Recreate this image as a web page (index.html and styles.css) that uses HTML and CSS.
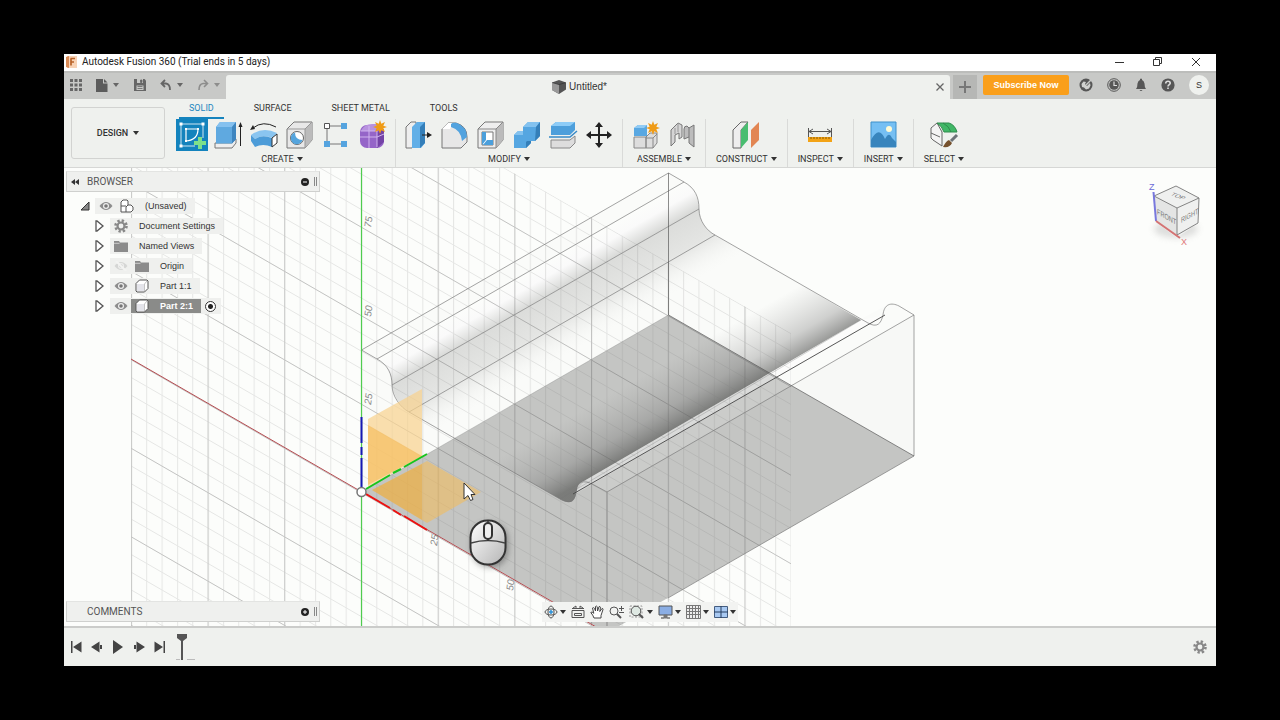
FILE: index.html
```html
<!DOCTYPE html>
<html lang="en">
<head>
<meta charset="utf-8">
<meta name="viewport" content="width=device-width, initial-scale=1">
<title>Autodesk Fusion 360</title>
<link rel="stylesheet" href="styles.css">
</head>
<body>
<svg class="defs" aria-hidden="true">
  <symbol id="eye" viewBox="0 0 14 10"><path d="M0.5 5Q7-3 13.5 5Q7 13 .5 5Z" fill="#8c8c8c"/><circle cx="7" cy="5" r="3" fill="#eee"/><circle cx="7" cy="5" r="1.8" fill="#777"/></symbol>
  <symbol id="folder" viewBox="0 0 14 12"><path d="M0 1h5l1 1.5h8V12H0Z" fill="#8b8b8b"/><path d="M0 3.3h5.5" stroke="#ddd" stroke-width=".8"/></symbol>
  <symbol id="part" viewBox="0 0 14 14"><path d="M1 4.5 4.5 1H12l1 1v7.500L9.500 13H2l-1-1Z" fill="#fff" stroke="#555"/><path d="M2 5h7v7H2Z" fill="#e4e4ea"/><path d="M9.500 12V5L12 2" fill="none" stroke="#aaa" stroke-width=".7"/></symbol>
  <symbol id="closed" viewBox="0 0 9 12"><path d="M1 1h1l6 5-6 5H1Z" fill="#fff" stroke="#555" stroke-width="1.300"/></symbol>
</svg>
<main class="app">
  <header class="titlebar">
    <svg class="logo" width="11" height="12" viewBox="0 0 11 12"><path d="M1 0h10v12H1Z" fill="#f8d3b6"/><path d="M0 1l3-1v12l-3-1Z" fill="#d98a55"/><path d="M4.500 2.500H9M5 2.500v7M5 6h3" stroke="#b9632a" stroke-width="1.700"/></svg>
    <h1 class="title">Autodesk Fusion 360 (Trial ends in 5 days)</h1>
    <div class="window-buttons">
      <button aria-label="Minimize"><svg width="10" height="10"><path d="M0 5.500h9" stroke="#333"/></svg></button>
      <button aria-label="Restore"><svg width="10" height="10" fill="none" stroke="#333"><path d="M.5 2.500h6v6h-6ZM2.500 2V.5h6v6H7"/></svg></button>
      <button aria-label="Close"><svg width="10" height="10"><path d="M1 1l8 8M9 1l-8 8" stroke="#333"/></svg></button>
    </div>
  </header>

  <div class="tabbar">
    <div class="quick">
      <button class="q-grid" aria-label="Data panel"><svg width="12" height="12" fill="#666"><path d="M0 0h3v3H0ZM4.500 0h3v3h-3ZM9 0h3v3H9ZM0 4.500h3v3H0ZM4.500 4.500h3v3h-3ZM9 4.500h3v3H9ZM0 9h3v3H0ZM4.500 9h3v3h-3ZM9 9h3v3H9Z"/></svg></button>
      <button class="q-drop" aria-label="File"><svg width="12" height="13"><path d="M0 0h7v4.500h4.500V13H0Z" fill="#5c5c5c"/><path d="M8 0l3.500 3.500H8Z" fill="#5c5c5c"/></svg><i class="caret"></i></button>
      <button class="q-save" aria-label="Save"><svg width="12" height="12"><path d="M0 0h10.500L12 1.500V12H0Z" fill="#666"/><path d="M3 0h6v4H3ZM2.500 6.500h7V11h-7Z" fill="#c8c9c7"/><path d="M6.500 1h1.500v2.500H6.500ZM3.500 7.500h5M3.500 9.500h5" fill="#666" stroke="#666" stroke-width=".8"/></svg></button>
      <button class="q-drop" aria-label="Undo"><svg width="12" height="12" fill="none" stroke="#666" stroke-width="1.800"><path d="M5 1 1.500 4.500 5 8M2 4.500h4Q10 5 10 11"/></svg><i class="caret"></i></button>
      <button class="q-drop faded" aria-label="Redo"><svg width="12" height="12" fill="none" stroke="#666" stroke-width="1.600"><path d="M7 1l3.500 3.500L7 8M10 4.500H6Q2 5 2 11"/></svg><i class="caret"></i></button>
    </div>
    <div class="doc-tab">
      <svg width="14" height="14" viewBox="0 0 14 14"><path d="M0 2.500 7 0l7 2.500v7L7 14 0 10Z" fill="#555"/><path d="M0 2.500 7 4.500V14L0 10Z" fill="#999"/><path d="M.5 2.600 7 4.600l6.500-2" fill="none" stroke="#333" stroke-width=".7"/></svg>
      <span>Untitled*</span>
      <button class="tab-close" aria-label="Close tab"><svg width="8" height="8"><path d="M.5.5l7 7M7.500.5l-7 7" stroke="#666" stroke-width="1.300"/></svg></button>
    </div>
    <button class="tab-new" aria-label="New tab"><svg width="12" height="12"><path d="M6 0v12M0 6h12" stroke="#777" stroke-width="2"/></svg></button>
    <button class="subscribe">Subscribe Now</button>
    <div class="account">
      <button aria-label="Extensions"><svg width="14" height="14"><circle cx="7" cy="7" r="6.500" fill="#565656"/><path d="M3 9 2.500 6l2-2.500 2.500.5-1 2 2 2 3-3 .5 2.500-1.500 3-3 1-2-2Z" fill="#d0d1cf"/><path d="M12 2 7 7" stroke="#c8c9c7" stroke-width="1.500"/></svg></button>
      <button aria-label="Job status"><svg width="14" height="14"><circle cx="7" cy="7" r="6.300" fill="#c8c9c7" stroke="#565656"/><circle cx="7" cy="7" r="4.800" fill="#565656"/><path d="M7 3.500V7.500h3" fill="none" stroke="#ddd" stroke-width="1.200"/></svg></button>
      <button aria-label="Notifications"><svg width="12" height="14" fill="#565656"><path d="M1 11Q2.500 9.500 2.500 5.500 3 2.500 5 2V.8h2V2q2 .5 2.500 3.500 0 4 1.500 5.500ZM4.500 12h3q-1.500 2-3 0Z"/></svg></button>
      <button aria-label="Help"><svg width="14" height="14"><circle cx="7" cy="7" r="6.600" fill="#565656"/><path d="M4.700 5.500Q4.800 3.300 7 3.300T9.200 5.300C9.200 6.700 7 6.700 7 8.600M7 9.500v1.600" fill="none" stroke="#ddd" stroke-width="1.600"/></svg></button>
      <button class="avatar" aria-label="Profile">S</button>
    </div>
  </div>

  <div class="ribbon">
    <button class="workspace">DESIGN <i class="caret"></i></button>
    <div class="ribbon-main">
      <nav class="ribbon-tabs">
        <button class="active">SOLID</button><button>SURFACE</button><button>SHEET METAL</button><button>TOOLS</button>
      </nav>
      <div class="groups">
        <section class="group">
          <div class="tools">
            <button class="on" aria-label="Create sketch"><svg width="32" height="32"><path d="M5 5h22M5 5v22M27 5v14M5 27h14" stroke="#fff" stroke-opacity=".8"/><path d="M10 10h12Q22 21 10 22Z" fill="none" stroke="#fff" stroke-width="1.200"/><g fill="#fff"><path d="M3.500 3.500h3v3h-3ZM25.500 3.500h3v3h-3ZM3.500 25.500h3v3h-3ZM9 9h2v2H9ZM21 9h2v2h-2ZM9 21h2v2H9Z"/></g><path d="M24 18v12M18 24h12" stroke="#7de08a" stroke-width="4"/></svg></button>
            <button aria-label="Extrude"><svg width="32" height="32"><path d="M3 24h17l4-4v4l-4 5H3Z" fill="#eee" stroke="#777"/><path d="M4 8l4-5h16v17l-4 4.500H4Z" fill="#5fa9e0"/><path d="M4 8l4-5h16l-4 5Z" fill="#85c1ef"/><path d="M20 8l4-5v17l-4 4.500Z" fill="#3e86c0"/><path d="M28.500 27V5" stroke="#222"/><path d="M26.500 8l2-5 2 5Z" fill="#222"/></svg></button>
            <button aria-label="Revolve"><svg width="32" height="32"><path d="M3 16Q15 7 29 14l-4 5Q14 15 7 20Z" fill="#8ac5f0"/><path d="M3 16l4 4v8l-4-6ZM7 20q7-5 17-1v9q-9-4-17 0Z" fill="#4c9cd8"/><path d="M24 19l5-4v9l-5 4Z" fill="#fff" stroke="#333"/><path d="M5 9Q15 1 28 8" fill="none" stroke="#222"/><path d="M2 11l3-5 2 4Z" fill="#222"/></svg></button>
            <button aria-label="Hole"><svg width="32" height="32"><path d="M3 10l7-7h18v18l-7 8H3Z" fill="#e8e8e8" stroke="#777"/><path d="M21 10l7-7v18l-7 8Z" fill="#bbb"/><path d="M3 10h18v19M21 10l7-7" fill="none" stroke="#999"/><circle cx="13" cy="19" r="6.500" fill="#fff" stroke="#666"/><path d="M11 13.500a6 6 0 1 0 7.500 7.500Q11 21 11 13.500Z" fill="#54a4dd"/></svg></button>
            <button aria-label="Pattern"><svg width="32" height="32"><path d="M8 7h14M7 9v14M9 25h13" stroke="#777"/><path d="M4.500 4.500h5v5h-5Z" fill="#fff" stroke="#555"/><path d="M21 4h6v6h-6ZM4 22h6v6H4ZM21 22h6v6h-6Z" fill="#55a4df"/></svg></button>
            <button aria-label="Form"><svg width="32" height="32"><rect x="4" y="6" width="24" height="23" rx="7" fill="#9565c8"/><path d="M5 12Q8 5 16 5h8l-5 7Z" fill="#b892df"/><path d="M21 13l7-3v13l-7 6Z" fill="#7443a6"/><path d="M4 18h17l7-3M13 7v22M5 12h16v16" stroke="#d0b4ee" fill="none"/><path d="M24 1l1.300 3.700L29 3l-1.700 3.700L31 8l-3.700 1.300L29 13l-3.700-1.700L24 15l-1.300-3.700L19 13l1.700-3.700L17 8l3.700-1.300L19 3l3.700 1.700Z" fill="#ef9b16"/></svg></button>
          </div>
          <button class="group-label">CREATE <i class="caret"></i></button>
        </section>
        <section class="group">
          <div class="tools">
            <button aria-label="Press pull"><svg width="32" height="32"><path d="M3 8l5-5h5v20l-4 6H3Z" fill="#eee" stroke="#777"/><path d="M9 8l5-5h8v21l-4 5H9Z" fill="#62afe7"/><path d="M17 8l5-5v21l-5 5Z" fill="#347fb9"/><path d="M19 16h7" stroke="#222"/><path d="M24 13l5 3-5 3Z" fill="#222"/></svg></button>
            <button aria-label="Fillet"><svg width="32" height="32"><path d="M3 10l6-6h8q11 3 11 14v5l-6 6H3Z" fill="#e7e7e7" stroke="#777"/><path d="M3 10l6-6h5l-3 6Z" fill="#fff"/><path d="M12 5q2-2 6-1 10 4 10 14l-5 4Q22 11 12 8Z" fill="#52a3df"/></svg></button>
            <button aria-label="Shell"><svg width="32" height="32"><path d="M3 10l7-7h18v18l-7 8H3Z" fill="#eee" stroke="#777"/><path d="M21 10l7-7v18l-7 8Z" fill="#bbb"/><path d="M3 10h18v19M21 10l7-7" fill="none" stroke="#888"/><path d="M7 13h11v13H7Z" fill="#fff" stroke="#777"/><path d="M7 13h4v8l-4 5ZM8 26l4-5h6v5Z" fill="#4b9fdb"/></svg></button>
            <button aria-label="Combine"><svg width="32" height="32"><path d="M3 16l4-4h5V8l5-5h12v14l-5 5h-4v2l-5 5H3Z" fill="#55a6e1"/><path d="M12 8l5-5h12l-4 5ZM3 16l4-4h5v4Z" fill="#83c2ef"/><path d="M25 8l4-5v14l-5 5ZM16 22h4v2l-5 5v-6Z" fill="#347fb9"/></svg></button>
            <button aria-label="Split body"><svg width="32" height="32"><path d="M4 7l5-4h19v8l-5 5H4Z" fill="#4d9fdb"/><path d="M4 7l5-4h19l-5 4Z" fill="#8dccf7"/><path d="M2 18h21l7-6" fill="none" stroke="#388ac7" stroke-width="1.500"/><path d="M4 21h19l5-4v7l-5 5H4Z" fill="#ddd" stroke="#888"/></svg></button>
            <button aria-label="Move"><svg width="32" height="32"><path d="M16 6v20M6 16h20" stroke="#222" stroke-width="2"/><path d="M16 3l4 5h-8ZM16 29l4-5h-8ZM3 16l5-4v8ZM29 16l-5-4v8Z" fill="#222"/></svg></button>
          </div>
          <button class="group-label">MODIFY <i class="caret"></i></button>
        </section>
        <section class="group">
          <div class="tools">
            <button aria-label="New component"><svg width="32" height="32"><path d="M4 9l4-3h9v11H4Z" fill="#59a8e2"/><path d="M4 9l4-3h9l-3 3Z" fill="#91cbf4"/><path d="M4 18h12v11H4ZM16 18l4-4h7v10l-4 5h-7Z" fill="#ddd" stroke="#888"/><path d="M16 19h7v10M23 19l4-4" fill="none" stroke="#888"/><path d="M23 2l1.300 3.700L28 4l-1.700 3.700L30 9l-3.700 1.300L28 14l-3.700-1.700L23 16l-1.300-3.700L18 14l1.700-3.700L16 9l3.700-1.300L18 4l3.700 1.700Z" fill="#ef9b16"/></svg></button>
            <button aria-label="Joint"><svg width="32" height="32" stroke="#777"><path d="M5 11l7-7 4 2v12l-3 2v-6l-4 2v7l-4 4Z" fill="#d5d5d5"/><path d="M12 4v9M9 15V9" fill="none" stroke="#999"/><path d="M18 10q0-3 3-3l2 2 5-3v22l-5-4v-6l-5 2Z" fill="#bcbcbc"/><path d="M23 9v9" fill="none"/></svg></button>
          </div>
          <button class="group-label">ASSEMBLE <i class="caret"></i></button>
        </section>
        <section class="group single">
          <div class="tools"><button aria-label="Offset plane"><svg width="32" height="32"><path d="M3 11l8-8h7l-7 8v18H3Z" fill="#eee" stroke="#666"/><path d="M11 11l7-8v18l-7 8Z" fill="#49bd70"/><path d="M21 11l8-8v18l-8 8Z" fill="#e28653"/></svg></button></div>
          <button class="group-label">CONSTRUCT <i class="caret"></i></button>
        </section>
        <section class="group single">
          <div class="tools"><button aria-label="Measure"><svg width="32" height="32"><path d="M4.500 9v10M27.500 9v10M5 12.500h22M9 10l-4 2.500L9 15M23 10l4 2.500-4 2.500" fill="none" stroke="#555"/><path d="M4 18h24v5H4Z" fill="#f3a316"/><path d="M7 18v2M10 18v2M13 18v2M16 18v2M19 18v2M22 18v2M25 18v2" stroke="#8a5b00"/></svg></button></div>
          <button class="group-label">INSPECT <i class="caret"></i></button>
        </section>
        <section class="group single">
          <div class="tools"><button aria-label="Insert image"><svg width="32" height="32"><path d="M4 3h25v25H4Z" fill="#75bff3" stroke="#3e91cb"/><path d="M4 21Q12 6 18 20q4-8 7-1l4 4v5H4Z" fill="#3885bd"/><circle cx="22" cy="10" r="3" fill="#fffbd5"/></svg></button></div>
          <button class="group-label">INSERT <i class="caret"></i></button>
        </section>
        <section class="group single last">
          <div class="tools"><button aria-label="Select"><svg width="32" height="32"><path d="M3 9 9 4l5 9v14L5 21 3 19ZM3 14l9 4" fill="#f4f4f4" stroke="#666"/><path d="M9 4h12q6 2 8 9H16Q14 7 9 4Z" fill="#40b766" stroke="#2f8b4c"/><path d="M15 4q6 3 8 9" fill="none" stroke="#2f8b4c"/><path d="M29 16l-6 6" stroke="#6d7378" stroke-width="3"/><path d="M21 21l3 3q-2 5-9 4 3-6 6-7Z" fill="#76512d"/></svg></button></div>
          <button class="group-label">SELECT <i class="caret"></i></button>
        </section>
      </div>
    </div>
  </div>

  <div class="viewport">
    <svg class="scene" viewBox="64 168 1152 458" preserveAspectRatio="xMidYMid slice" role="img" aria-label="Model view">
      <defs>
        <pattern id="minor" width="15.340" height="17.700" patternUnits="userSpaceOnUse" patternTransform="translate(361 492) skewY(30)"><path d="M0 .5H15.340M.5 0V17.700" stroke="#777" stroke-opacity=".17" fill="none"/></pattern>
        <pattern id="major" width="76.700" height="88.500" patternUnits="userSpaceOnUse" patternTransform="translate(361 492) skewY(30)"><path d="M0 .5H76.700M.5 0V88.500" stroke="#555" stroke-opacity=".24" fill="none"/></pattern>
        <linearGradient id="crest" gradientUnits="userSpaceOnUse" x1="377" y1="359" x2="392" y2="385"><stop offset="0" stop-color="#fcfdfb"/><stop offset=".45" stop-color="#fafafa"/><stop offset="1" stop-color="#d9dad8"/></linearGradient>
        <linearGradient id="valley" gradientUnits="userSpaceOnUse" x1="392" y1="385" x2="425" y2="442"><stop offset="0" stop-color="#dbdcda"/><stop offset=".45" stop-color="#e4e5e3"/><stop offset="1" stop-color="#fcfdfb" stop-opacity="0"/></linearGradient>
        <linearGradient id="groove" gradientUnits="userSpaceOnUse" x1="584" y1="481" x2="553" y2="427"><stop offset="0" stop-color="#3c3d3b" stop-opacity=".54"/><stop offset=".35" stop-color="#555" stop-opacity=".26"/><stop offset="1" stop-color="#777" stop-opacity="0"/></linearGradient>
        <linearGradient id="mouse" x2="1" y2="1"><stop stop-color="#fff"/><stop offset="1" stop-color="#b5b5b5"/></linearGradient>
        <filter id="soft" x="-50%" y="-50%" width="200%" height="200%"><feGaussianBlur stdDeviation="3"/></filter>
      </defs>
      <path d="M361.500 350 668.500 173 684 182C695 188 699 197 699 209S707 231 715 235L861 319 891 303 914 315V456L607 633 361.500 492Z" fill="#fafbf9"/>
      <path d="M607 492 914 315V456L607 633Z" fill="#f7f8f6"/>
      <path d="M377 359 684 182Q698 190 699 209L392 385Q392 368 377 359Z" fill="url(#crest)"/>
      <path d="M392 385 699 209Q700 227 715 235L744 252 437 429 409 412Q394 401 392 385Z" fill="url(#valley)"/>
      <path d="M361.500 492 668.500 315 914 456 607 633Z" fill="#c4c5c3"/>
      <path d="M409 412 560 499C572 506 575 501 577 490 577 485 580 482 584 481L861 320 715 235Z" fill="url(#groove)"/>
      <path d="M577 490 584 481 861 320 885 315 575 494Z" fill="#fff" opacity=".38"/>
      <path d="M575 494 885 315 891 303 914 315 607 492 594 484Z" fill="#fff" opacity=".13"/>
      <path d="M131 168H505L791 333V626H131Z" fill="url(#minor)"/>
      <path d="M131 168H505L791 333V626H131Z" fill="url(#major)"/>
      <g fill="none" stroke="#777" stroke-opacity=".75" stroke-width=".9">
        <path d="M361.500 350 668.500 173 684 182C695 188 699 197 699 209S707 231 715 235L868 323C877 328 881 324 883 315 884 304 891 302 899 306L914 315V456L668 598"/>
        <path d="M361.500 350 377 359C388 365 392 374 392 385S400 407 409 412L560 499C569 504 575 502 576 491 577 481 584 480 592 484L607 492V626"/>
        <path d="M377 359 684 182M392 385 699 209M409 412 715 235M607 492 914 315"/>
        <path d="M668.500 173V315L914 456" stroke="#555"/>
        <path d="M361.500 492 668.500 315M560 499 861 320" stroke-opacity=".35"/>
        <path d="M573 494 885 315" stroke="#444" stroke-opacity="1"/>
      </g>
      <path d="M131 359 610 635" stroke="#b54b50" fill="none"/>
      <path d="M361.500 168V626" stroke="#4fcc4f" stroke-width="1.200"/>
      <path d="M368 419 422 389V456L368 488Z" fill="#f8d28d" opacity=".7"/>
      <path d="M368 425 422 456 368 485Z" fill="#f6b64b" opacity=".55"/>
      <path d="M372 490 427 461 481 492 427 523Z" fill="#f5bc55" opacity=".55"/>
      <path d="M372 490 422 464V520Z" fill="#e6a83c" opacity=".45"/>
      <g fill="none" stroke-width="2">
        <path d="M361.500 417V443M361.500 447V455M361.500 458V488" stroke="#1717b5"/>
        <path d="M366 489 390 475M393 473 401 469M404 467 427 454" stroke="#16c51b"/>
        <path d="M366 494 390 508M393 510 401 515M404 516 427 530" stroke="#ed1111"/>
      </g>
      <circle cx="361.500" cy="492" r="4.500" fill="#fff" stroke="#777" stroke-width="1.500"/>
      <g class="axis-label">
        <text transform="translate(371 228) rotate(-82)">75</text><text transform="translate(371 317) rotate(-82)">50</text><text transform="translate(371 405) rotate(-82)">25</text><text transform="translate(437 546) rotate(-82)">25</text><text transform="translate(513 591) rotate(-82)">50</text>
      </g>
      <path d="M464 483V499L468 495.500 470.500 500.500 473 499.500 471 494.500H475Z" fill="#fff" stroke="#333"/>
      <rect x="472" y="523" width="36" height="44" rx="17" fill="#444" opacity=".5" filter="url(#soft)"/>
      <rect x="470.500" y="520.500" width="35" height="44" rx="17" fill="url(#mouse)" stroke="#333" stroke-width="2"/>
      <path d="M471 543Q488 538 505 543" fill="none" stroke="#444" stroke-width="1.500"/>
      <path d="M488 520V523M488 539V541" stroke="#333" stroke-width="1.500"/><rect x="484" y="523" width="8" height="16" rx="4" fill="#eee" stroke="#333" stroke-width="2"/>
      <ellipse cx="1176" cy="229" rx="22" ry="9" fill="#999" opacity=".3" filter="url(#soft)"/>
      <path d="M1154 196 1176 186 1199 198 1198 223 1177 238 1157 223Z" fill="#eff0ef"/>
      <path d="M1154 196 1177 208 1177 235 1157 223Z" fill="#e4e5e4"/>
      <path d="M1154 196 1176 186 1199 198 1177 208ZM1177 208V235L1198 223 1199 198" fill="none" stroke="#777" stroke-width=".9"/>
      <path d="M1153.500 192 1156 221" stroke="#7878dd" stroke-width="2"/><path d="M1156 221 1180 238" stroke="#d47373" stroke-width="2"/>
      <g class="cube-label"><text transform="matrix(.9 .35 -.7 .55 1170 195)">TOP</text><text transform="matrix(.8 .45 0 1.1 1157 214)">FRONT</text><text transform="matrix(.8 -.45 0 1.1 1181 223)">RIGHT</text></g>
      <text class="axis-z" x="1149" y="190">Z</text><text class="axis-x" x="1181" y="245">X</text>
    </svg>

    <aside class="browser">
      <header class="panel"><svg width="8" height="6"><path d="M4 0v6L0 3ZM8 0v6L4 3Z" fill="#333"/></svg><h2>BROWSER</h2><button aria-label="Collapse browser"><svg width="8" height="8"><circle cx="4" cy="4" r="4" fill="#222"/><path d="M2 4h4" stroke="#fff"/></svg></button><i class="grip"></i></header>
      <ul class="tree">
        <li class="root"><span class="slot"><svg width="10" height="10"><path d="M9 1v8H1Z" fill="#888" stroke="#333"/></svg></span><div class="item"><span class="slot"><svg width="14" height="10"><use href="#eye"/></svg></span><span class="slot"><svg width="14" height="14" fill="#fff" stroke="#555"><path d="M1 3l2-2h4l1 1v4h3l2 2v3l-2 2H1Z"/><path d="M6 13V8l2-2M1 7h5" fill="none"/></svg></span><span class="name">(Unsaved)</span></div></li>
        <li><span class="slot"><svg width="9" height="12"><use href="#closed"/></svg></span><div class="item"><span class="slot"><svg width="14" height="14"><circle cx="7" cy="7" r="5.500" fill="none" stroke="#888" stroke-width="2.600" stroke-dasharray="2.300 2.020"/><circle cx="7" cy="7" r="3.500" fill="none" stroke="#888" stroke-width="2.200"/></svg></span><span class="name">Document Settings</span></div></li>
        <li><span class="slot"><svg width="9" height="12"><use href="#closed"/></svg></span><div class="item"><span class="slot"><svg width="14" height="12"><use href="#folder"/></svg></span><span class="name">Named Views</span></div></li>
        <li><span class="slot"><svg width="9" height="12"><use href="#closed"/></svg></span><div class="item"><span class="slot hidden-eye"><svg width="14" height="10"><use href="#eye"/><path d="M2 0l10 10" stroke="#fff" stroke-width="2"/></svg></span><span class="slot"><svg width="14" height="12"><use href="#folder"/></svg></span><span class="name">Origin</span></div></li>
        <li><span class="slot"><svg width="9" height="12"><use href="#closed"/></svg></span><div class="item"><span class="slot"><svg width="14" height="10"><use href="#eye"/></svg></span><span class="slot"><svg width="14" height="14"><use href="#part"/></svg></span><span class="name">Part 1:1</span></div></li>
        <li><span class="slot"><svg width="9" height="12"><use href="#closed"/></svg></span><div class="item"><span class="slot"><svg width="14" height="10"><use href="#eye"/></svg></span><label class="selected" for="active-part"><span class="slot"><svg width="14" height="14"><use href="#part"/></svg></span><span class="name">Part 2:1</span></label><input id="active-part" type="radio" name="active" checked></div></li>
      </ul>
    </aside>

    <div class="bottom">
      <section class="panel comments"><h2>COMMENTS</h2><button aria-label="Expand comments"><svg width="8" height="8"><circle cx="4" cy="4" r="4" fill="#222"/><path d="M2 4h4M4 2v4" stroke="#fff"/></svg></button><i class="grip"></i></section>
      <nav class="navbar">
        <button aria-label="Orbit"><svg width="14" height="14" fill="none" stroke="#555"><ellipse cx="7" cy="7" rx="6" ry="3"/><ellipse cx="7" cy="7" rx="3" ry="6"/><path d="M5 7h4M7 5v4" stroke="#2b91d8" stroke-width="1.500"/></svg><i class="caret"></i></button>
        <button aria-label="Look at"><svg width="14" height="14" fill="none" stroke="#555"><path d="M1 5.500h12v7H1ZM3.500 8.500h7v2h-7ZM1 3.500h12M2 3l3-2v2M9 3V1l3 2"/></svg></button>
        <button aria-label="Pan"><svg width="14" height="14"><path d="M4 13Q3 10 .8 7.500q1-1.500 3 .8L2.500 3q1-1 2 .4L5.500 6 5.500 1.500q1-1 1.700.2L7.600 6 9 1.700q1.200-.5 1.500.5L9.800 6.500 12 3.500q1.300 0 1 1L11 10.500V13Z" fill="#fff" stroke="#444"/></svg></button>
        <button aria-label="Zoom"><svg width="15" height="14" fill="none" stroke="#555"><circle cx="5" cy="6" r="4"/><path d="M8 9l4 4" stroke-width="2"/><path d="M10 3.500h5M12.500 1v5M10 7.500h5"/></svg></button>
        <button aria-label="Fit"><svg width="16" height="14" fill="none" stroke="#555"><path d="M1 1h12v11H1Z" stroke-dasharray="2 1.500" stroke="#999"/><circle cx="7" cy="6" r="4.800" fill="#dfe9e3"/><path d="M10 9l4 4" stroke-width="2.200"/></svg><i class="caret"></i></button>
        <button aria-label="Display settings"><svg width="15" height="14"><path d="M1 1h13v9H1Z" fill="#8baee4" stroke="#555"/><path d="M6 10h3v3h3H3h3Z" stroke="#777" fill="#777"/></svg><i class="caret"></i></button>
        <button aria-label="Grid settings"><svg width="15" height="14"><path d="M.5.500h14v13H.5ZM3.500 0v14M6.500 0v14M9.500 0v14M12.500 0v14M0 3.500h15M0 6.500h15M0 9.500h15" fill="#eee" stroke="#777"/></svg><i class="caret"></i></button>
        <button aria-label="Viewports"><svg width="14" height="12"><path d="M.5.500h13v11H.5Z" fill="#a8c9f2" stroke="#445d80"/><path d="M7 0v12M0 6h14" stroke="#263e60"/></svg><i class="caret"></i></button>
      </nav>
    </div>
  </div>

  <footer class="timeline">
    <button aria-label="Start"><svg width="12" height="12" fill="#444"><path d="M1 0h1.500v12H1ZM11.500.5v11L3 6Z"/></svg></button>
    <button aria-label="Step back"><svg width="12" height="12" fill="#444"><path d="M8.500.5v11L0 6ZM9 4h2v4H9Z"/></svg></button>
    <button aria-label="Play"><svg width="12" height="14" fill="#444"><path d="M1 0l10 7-10 7Z"/></svg></button>
    <button aria-label="Step forward"><svg width="12" height="12" fill="#444"><path d="M3.500.5v11L12 6ZM1 4h2v4H1Z"/></svg></button>
    <button aria-label="End"><svg width="12" height="12" fill="#444"><path d="M9.500 0H11v12H9.500ZM.5.500v11L9 6Z"/></svg></button>
    <svg class="marker" width="20" height="28"><path d="M1 1h10v4L7 8v19H5V8L1 5Z" fill="#555"/><path d="M0 26.500h4M11 26.500h8" stroke="#bbb"/></svg>
    <button class="settings" aria-label="Settings"><svg width="14" height="14"><circle cx="7" cy="7" r="5.500" fill="none" stroke="#888" stroke-width="2.600" stroke-dasharray="2.300 2.020"/><circle cx="7" cy="7" r="3.500" fill="none" stroke="#888" stroke-width="2.200"/></svg></button>
  </footer>
</main>
</body>
</html>
```

FILE: styles.css
```css
* { box-sizing: border-box; }
body {
  margin: 0;
  min-height: 100vh;
  padding: 54px 5vw;
  display: flex;
  background: #000;
  color: #333;
  font: 9px/12px "Liberation Sans", Arial, sans-serif;
}
button {
  margin: 0;
  padding: 0;
  border: 0;
  background: none;
  color: inherit;
  font: inherit;
  display: flex;
  align-items: center;
  justify-content: center;
}
svg { display: block; flex: none; }
h1, h2 { margin: 0; font: inherit; }
.defs { position: absolute; width: 0; height: 0; }
.caret {
  border: 3px solid transparent;
  border-top: 4px solid #333;
  border-bottom: 0;
}
.app {
  flex: 1;
  min-width: 0;
  display: flex;
  flex-direction: column;
  background: #eff1ee;
}

.titlebar {
  display: flex;
  align-items: center;
  height: 17px;
  padding: 0 15px 2px 2px;
  gap: 5px;
  background: #fff;
}
.title {
  flex: 1;
  color: #222;
  font: 10px/14px Roboto, sans-serif;
}
.window-buttons { display: flex; gap: 28px; }

.tabbar {
  display: flex;
  height: 28px;
  background: #c8c9c7;
  border-top: 2px solid #bcbdbb;
}
.quick {
  flex: none;
  width: 162px;
  display: flex;
  align-items: center;
  justify-content: space-between;
  padding: 0 6px 2px;
}
.quick .caret { border-top-color: #666; }
.q-drop { gap: 5px; }
.faded { opacity: .6; }
.doc-tab {
  flex: 1;
  display: flex;
  align-items: center;
  justify-content: center;
  gap: 3px;
  margin-top: 2px;
  padding-right: 6px;
  border-radius: 3px 3px 0 0;
  background: #eff1ee;
  font-size: 10px;
}
.doc-tab svg:first-child { margin-left: auto; }
.tab-close { margin-left: auto; }
.tab-new {
  width: 24px;
  margin: 2px 6px 0 3px;
  background: #b6b7b5;
}
.subscribe {
  width: 86px;
  height: 20px;
  margin-top: 2px;
  border-radius: 2px;
  background: #fa9f1b;
  color: #fff;
  font-weight: 700;
}
.account {
  display: flex;
  align-items: center;
  gap: 14px;
  padding: 0 7px 2px 10px;
}
.avatar {
  width: 20px;
  height: 20px;
  border-radius: 50%;
  background: #eff1ee;
}

.ribbon {
  display: flex;
  border-bottom: 1px solid #d6d7d5;
  font-family: Roboto, sans-serif;
}
.workspace {
  width: 94px;
  margin: 8px 4px 8px 7px;
  gap: 5px;
  border: 1px solid #d2d3d1;
  border-radius: 3px;
  font-weight: 500;
}
.ribbon-tabs { display: flex; gap: 20px; padding-left: 10px; }
.ribbon-tabs button {
  height: 20px;
  padding: 0 10px;
  border-bottom: 2px solid transparent;
}
.ribbon-tabs .active { color: #1c87c0; border-color: #1684be; }
.groups { display: flex; }
.group {
  display: flex;
  flex-direction: column;
  align-items: center;
  padding: 0 5px;
  border-right: 1px solid #d9dad8;
}
.single { padding: 0 10px; }
.last { border: 0; }
.tools { display: flex; }
.tools button { width: 32px; height: 32px; margin: 0 2px; }
.tools .on { background: #1383bd; }
.group-label { height: 16px; gap: 3px; }

.viewport {
  position: relative;
  flex: 1;
  display: flex;
  flex-direction: column;
  justify-content: space-between;
  overflow: hidden;
  padding: 3px 2px 4px;
  background: #fcfdfb;
}
.scene { position: absolute; inset: 0; width: 100%; height: 100%; }
.axis-label text { font: italic 10px "Liberation Sans", sans-serif; fill: #888; }
.cube-label text { font: 7px "Liberation Sans", sans-serif; fill: #777; }
.axis-z, .axis-x { font: 9px "Liberation Sans", sans-serif; }
.axis-z { fill: #6b6bd8; }
.axis-x { fill: #e07878; }
.browser { position: relative; width: 254px; }
.panel {
  display: flex;
  align-items: center;
  width: 254px;
  height: 21px;
  padding: 0 2px 0 4px;
  border: 1px solid #cfd0ce;
  border-top-color: #e3e4e2;
  background: #eff0ee;
  color: #555;
}
.panel h2 { flex: 1; margin-left: 8px; font: 10px/12px Roboto, sans-serif; }
.comments { padding-left: 12px; }
.panel button { margin-right: 1px; }
.grip {
  width: 3px;
  height: 9px;
  margin-left: 4px;
  border: solid #888;
  border-width: 0 1px;
}
.tree { margin: 4px 0 0; padding: 0; list-style: none; }
.tree li { display: flex; align-items: center; height: 20px; padding-left: 23px; }
.tree .root { padding-left: 8px; }
.slot { flex: none; width: 21px; display: flex; align-items: center; justify-content: center; }
.item {
  display: flex;
  align-items: center;
  height: 16px;
  background: #eff0ee;
}
.name { padding: 0 8px; }
.hidden-eye { opacity: .25; }
.selected {
  display: flex;
  align-items: center;
  height: 14px;
  background: #8a8b89;
  color: #fff;
  font-weight: 700;
}
.item input {
  appearance: none;
  width: 11px;
  height: 11px;
  margin: 0 5px 0 4px;
  border: 1px solid #333;
  border-radius: 50%;
  background: radial-gradient(circle, #222 2px, #fff 3px);
}
.bottom {
  position: relative;
  display: grid;
  grid-template-columns: 1fr auto 1fr;
  align-items: center;
}
.navbar {
  display: flex;
  gap: 5px;
  height: 20px;
  padding: 0 2px;
  background: #f2f3f1;
}
.navbar button { gap: 2px; }

.timeline {
  display: flex;
  align-items: center;
  gap: 9px;
  height: 40px;
  padding: 0 9px 0 6px;
  border-top: 2px solid #cbccca;
}
.marker { margin-left: 1px; }
.settings { margin-left: auto; }
```
